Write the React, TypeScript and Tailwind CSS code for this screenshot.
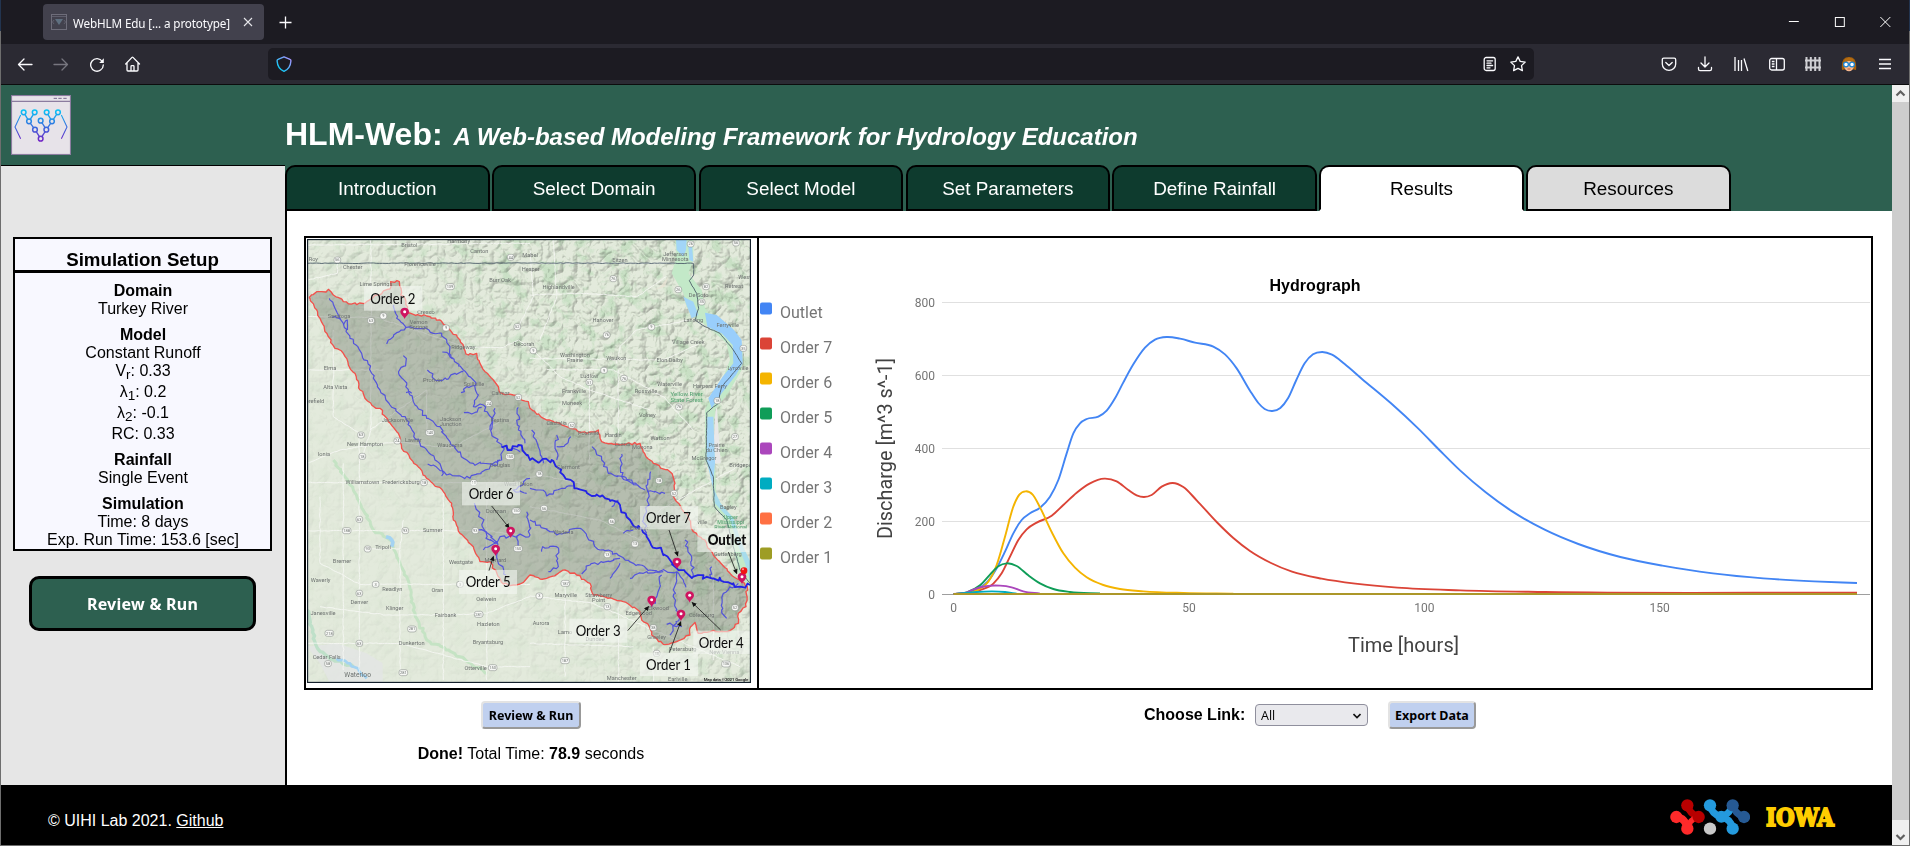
import React from "react";

type Pt = [number, number];

/* Smooth curve through the points: cubic Hermite segments, tangents weighted by spacing. */
function smooth(pts: Pt[]): string {
  const n = pts.length;
  const h = pts.slice(1).map((p, i) => p[0] - pts[i][0]);
  const s = pts.slice(1).map((p, i) => (p[1] - pts[i][1]) / h[i]);
  const m = pts.map((_, i) => {
    if (i === 0) return s[0];
    if (i === n - 1) return s[n - 2];
    return (s[i - 1] * h[i] + s[i] * h[i - 1]) / (h[i - 1] + h[i]);
  });
  let d = `M${pts[0][0]} ${pts[0][1]}`;
  for (let i = 0; i < n - 1; i++) {
    const [x0, y0] = pts[i];
    const [x1, y1] = pts[i + 1];
    const k = h[i] / 3;
    d += `C${x0 + k} ${y0 + m[i] * k} ${x1 - k} ${y1 - m[i + 1] * k} ${x1} ${y1}`;
  }
  return d;
}

/* Polyline subdivided into short, slightly displaced steps, for river banks and borders. */
function rough(src: string, amp: number, close = false): string {
  const pts = src
    .trim()
    .split(/\s+/)
    .map((s) => s.split(",").map(Number) as Pt);
  if (close) pts.push(pts[0]);
  let seed = Math.round(pts[0][0] * 13 + pts[0][1] * 7);
  const rnd = () => {
    seed = (seed * 1103515245 + 12345) % 2147483648;
    return seed / 2147483648 - 0.5;
  };
  let d = `M${pts[0][0]} ${pts[0][1]}`;
  for (let i = 1; i < pts.length; i++) {
    const [x0, y0] = pts[i - 1];
    const [x1, y1] = pts[i];
    const n = Math.max(1, Math.round(Math.hypot(x1 - x0, y1 - y0) / 9));
    for (let k = 1; k <= n; k++) {
      const t = k / n;
      const a = k === n ? 0 : amp;
      d += `L${(x0 + (x1 - x0) * t + rnd() * a).toFixed(1)} ${(y0 + (y1 - y0) * t + rnd() * a).toFixed(1)}`;
    }
  }
  return d;
}

/* ------------------------------ browser chrome ------------------------------ */

const ic = "h-4 w-4";

function ToolButton({ children }: { children: React.ReactNode }) {
  return <div className="flex h-10 w-9 items-center justify-center">{children}</div>;
}

function TabStrip() {
  return (
    <div className="flex h-11 items-start bg-[#1c1b22] pl-[42px]">
      <div className="mt-1 flex h-9 w-[221px] items-center rounded-[4px] bg-[#42414d] pl-2">
        <svg className={ic} viewBox="0 0 16 16" fill="none">
          <rect x="0.5" y="0.5" width="15" height="15" stroke="#6e6d7a" />
          <path d="M4 5h8L8 11z" fill="#5f7080" />
          <path d="M3 6L1.500 8L3 10M13 6l1.500 2L13 10M1 2.500h14" stroke="#5f5e6c" />
        </svg>
        <span className="ml-1.5 w-[158px] whitespace-nowrap pt-px font-['Noto_Sans',sans-serif] text-[11.700px] leading-4 tracking-[-0.130px] text-[#fbfbfe]">
          WebHLM Edu [... a prototype]
        </span>
        <svg className="ml-[12px] h-[10px] w-[10px]" viewBox="0 0 10 10" stroke="#e6e6ea" strokeWidth="1.1">
          <path d="M1 1l8 8M9 1L1 9" />
        </svg>
      </div>
      <svg className="ml-[15px] mt-4 h-[13px] w-[13px]" viewBox="0 0 13 13" stroke="#fbfbfe" strokeWidth="1.300">
        <path d="M6.500 0.500v12M0.500 6.500h12" />
      </svg>
      <div className="ml-auto flex w-[137px] items-center pt-[17px]">
        <svg className="h-[11px] w-[46px]" viewBox="0 0 46 11" stroke="#fff" fill="none">
          <path d="M17 4.500h10" />
        </svg>
        <svg className="h-[11px] w-[46px]" viewBox="0 0 46 11" stroke="#fff" fill="none">
          <rect x="17.500" y="0.500" width="9" height="9" />
        </svg>
        <svg className="h-[11px] w-[46px]" viewBox="0 0 46 11" stroke="#fff" fill="none">
          <path d="M17.500 0l10 10M27.500 0L17.500 10" />
        </svg>
      </div>
    </div>
  );
}

function Toolbar() {
  return (
    <div className="flex h-[41px] items-start border-b border-[#0c0c0d] bg-[#2b2a33] pl-1.5 pr-[6px]">
      <ToolButton>
        <svg className={ic} viewBox="0 0 16 16" fill="none" stroke="#fbfbfe" strokeWidth="1.300" strokeLinecap="round" strokeLinejoin="round">
          <path d="M15 8.500H1.500M7 3L1.500 8.500 7 14" />
        </svg>
      </ToolButton>
      <ToolButton>
        <svg className={ic} viewBox="0 0 16 16" fill="none" stroke="#77767f" strokeWidth="1.300" strokeLinecap="round" strokeLinejoin="round">
          <path d="M1 8.500h13.500M9 3l5.500 5.500L9 14" />
        </svg>
      </ToolButton>
      <ToolButton>
        <svg className={ic} viewBox="0 0 16 16" fill="none" stroke="#fbfbfe" strokeWidth="1.300" strokeLinecap="round">
          <path d="M13.300 5.500A6.300 6.300 0 1 0 14.300 9" />
          <path d="M14.800 2.300v4.600h-4.600z" fill="#fbfbfe" stroke="none" />
        </svg>
      </ToolButton>
      <ToolButton>
        <svg className={ic} viewBox="0 0 16 16" fill="none" stroke="#fbfbfe" strokeWidth="1.300" strokeLinejoin="round" strokeLinecap="round">
          <path d="M.7 8L7 1.400q.5-.5 1 0L14.500 8M2 6.800V14q0 1 1 1h9q1 0 1-1V6.800M6 15v-4.500q0-.8.8-.8h1.400q.8 0 .8.8V15" />
        </svg>
      </ToolButton>
      <div className="ml-[117px] mt-1 flex h-8 w-[1266px] items-center rounded-[5px] bg-[#1c1b22] pl-2 pr-2">
        <svg className={ic} viewBox="0 0 16 16" fill="none" strokeWidth="1.400" strokeLinejoin="round">
          <defs>
            <linearGradient id="shield" x1="0" y1="1" x2="1" y2="0">
              <stop offset="0.100" stopColor="#00d0f5" />
              <stop offset="1" stopColor="#b98cff" />
            </linearGradient>
          </defs>
          <path d="M8 .8L14 3.400Q15 3.800 14.900 5C14.600 10 12.500 13.500 8 15.300 3.500 13.500 1.400 10 1.100 5 1 3.800 2 3.400 2 3.400z" stroke="url(#shield)" />
        </svg>
        <svg className={`ml-auto ${ic}`} viewBox="0 0 16 16" fill="none" stroke="#fbfbfe" strokeWidth="1.300" strokeLinecap="round">
          <rect x="2.200" y="1.500" width="11" height="13" rx="2" />
          <path d="M5 4.800h5.600M5 7.200h4M5 9.500h5.600M5 11.800h3" />
        </svg>
        <svg className={`ml-3 ${ic}`} viewBox="0 0 16 16" fill="none" stroke="#fbfbfe" strokeWidth="1.300" strokeLinejoin="round">
          <path d="M8 .9l2.200 4.500 5 .7-3.700 3.500.9 5L8 12.300l-4.400 2.300.9-5L.8 6.100l5-.7z" />
        </svg>
      </div>
      <div className="ml-auto flex">
        <ToolButton>
          <svg className={ic} viewBox="0 0 16 16" fill="none" stroke="#fbfbfe" strokeWidth="1.300" strokeLinecap="round" strokeLinejoin="round">
            <path d="M2.800 2.200h10.400q1.500 0 1.500 1.500V8A6.700 6.300 0 0 1 1.300 8V3.700q0-1.500 1.500-1.500zM4.800 6.500L8 9.500l3.200-3" />
          </svg>
        </ToolButton>
        <ToolButton>
          <svg className={ic} viewBox="0 0 16 16" fill="none" stroke="#fbfbfe" strokeWidth="1.300" strokeLinecap="round" strokeLinejoin="round">
            <path d="M8 .8v10M4 7l4 4 4-4M1.500 11.500V13q0 1.700 1.700 1.700h9.600q1.700 0 1.700-1.700v-1.500" />
          </svg>
        </ToolButton>
        <ToolButton>
          <svg className={ic} viewBox="0 0 16 16" fill="none" stroke="#fbfbfe" strokeWidth="1.300">
            <path d="M2 1v14M5.500 4v11M8.500 4v11M11 2.500L14.800 15" />
          </svg>
        </ToolButton>
        <ToolButton>
          <svg className={ic} viewBox="0 0 16 16" fill="none" stroke="#fbfbfe" strokeWidth="1.300">
            <rect x="0.700" y="2.500" width="14.600" height="11.500" rx="2" />
            <path d="M7.500 2.500V14M2.800 5.500h2.700M2.800 8h2.700M2.800 10.500h2.700" />
          </svg>
        </ToolButton>
        <ToolButton>
          <svg className={ic} viewBox="0 0 16 16" fill="none" stroke="#cfcfd4" strokeWidth="2">
            <path d="M1.500 1v14M5.800 1v14M10.200 1v14M14.500 1v14M0 4.500h16M0 11.500h16" />
          </svg>
        </ToolButton>
        <ToolButton>
          <svg className={ic} viewBox="0 0 16 16">
            <path d="M1 14Q-.5 1 8 1t7 13q-3-1-7-1t-7 1z" fill="#a5610d" />
            <ellipse cx="8" cy="10" rx="4.800" ry="5.200" fill="#f9b98f" />
            <path d="M3 6q3 0 5-2 2 2 5 2l-1-3-4-1.500L4 3z" fill="#b56c12" />
            <circle cx="5" cy="8.500" r="2.400" fill="#fff" stroke="#1d86d6" strokeWidth="1.300" />
            <circle cx="11" cy="8.500" r="2.400" fill="#fff" stroke="#1d86d6" strokeWidth="1.300" />
            <path d="M6.500 13h3" stroke="#b35a3c" />
          </svg>
        </ToolButton>
        <ToolButton>
          <svg className={ic} viewBox="0 0 16 16" fill="none" stroke="#fbfbfe" strokeWidth="1.300">
            <path d="M2 3.500h12M2 8h12M2 12.500h12" />
          </svg>
        </ToolButton>
      </div>
    </div>
  );
}

function Scrollbar() {
  return (
    <div className="flex w-[17px] shrink-0 flex-col bg-[#f0f0f0]">
      <svg className="h-[17px] w-[17px]" viewBox="0 0 17 17" fill="none" stroke="#606060" strokeWidth="2.200">
        <path d="M4.500 10.500l4-4 4 4" />
      </svg>
      <div className="h-[718px] bg-[#cdcdcd]" />
      <svg className="mt-auto h-[17px] w-[17px]" viewBox="0 0 17 17" fill="none" stroke="#606060" strokeWidth="2.200">
        <path d="M4.500 7l4 4 4-4" />
      </svg>
    </div>
  );
}

/* ---------------------------------- logos ---------------------------------- */

const branches: Pt[][] = [
  [[38, 52], [54, 79]],
  [[71, 52], [54, 79]],
  [[54, 79], [72, 104]],
  [[72, 104], [89, 131]],
  [[89, 131], [106, 104]],
  [[106, 104], [89, 77]],
  [[106, 104], [123, 79]],
  [[123, 79], [107, 52]],
  [[123, 79], [141, 52]],
];
const nodes: Pt[] = [[38, 52], [71, 52], [107, 52], [141, 52], [54, 79], [123, 79], [89, 77], [72, 104], [106, 104], [89, 131]];

function AppLogo() {
  return (
    <svg className="h-[60px] w-[60px]" viewBox="0 0 180 180" fill="none">
      <defs>
        <linearGradient id="tree" gradientUnits="userSpaceOnUse" x1="0" y1="45" x2="0" y2="140">
          <stop offset="0" stopColor="#08c4f6" />
          <stop offset="0.550" stopColor="#3a68dc" />
          <stop offset="1" stopColor="#7420c4" />
        </linearGradient>
      </defs>
      <rect x="1.500" y="1.500" width="177" height="177" fill="#e7e3e9" stroke="#8b7c9f" strokeWidth="3.500" />
      <path d="M0 19h180" stroke="#8b7c9f" strokeWidth="3.500" />
      <path d="M128 10h10M142 10h10M157 10h10" stroke="#75678c" strokeWidth="3" />
      <g stroke="url(#tree)" strokeWidth="4">
        {branches.map((b, i) => (
          <path key={i} d={`M${b[0][0]} ${b[0][1]}L${b[1][0] + 0.01} ${b[1][1]}`} />
        ))}
        <path d="M29 60L12 96l17 35M151 60l17 36-17 35" strokeWidth="3.200" />
        {nodes.map(([x, y], i) => (
          <circle key={i} cx={x} cy={y} r="7" fill="#e7e3e9" strokeWidth="4.500" />
        ))}
      </g>
    </svg>
  );
}

function LabLogo() {
  return (
    <svg className="h-9 w-20" viewBox="122 57 240 108">
      <g strokeWidth="21" fill="none">
        <path d="M142 111Q168 114 174 145" stroke="#ff2a2a" strokeWidth="22" />
        <path d="M174 76Q182 104 208 111" stroke="#b80000" />
        <path d="M174 145Q180 118 204 113" stroke="#ff2a2a" strokeWidth="17" />
        <circle cx="141" cy="111" r="18.500" fill="#ff2a2a" />
        <circle cx="174" cy="146" r="18.500" fill="#ff2a2a" />
        <circle cx="174" cy="76" r="18.500" fill="#b80000" />
        <circle cx="208" cy="111" r="18.500" fill="#b80000" />
        <path d="M310 76Q318 104 344 111" stroke="#265a94" />
        <path d="M242 76Q248 104 276 111Q304 116 310 145" stroke="#249add" />
        <path d="M276 108Q298 104 303 88" stroke="#249add" strokeWidth="20" />
        <circle cx="242" cy="76" r="18.500" fill="#249add" />
        <circle cx="276" cy="110" r="18" fill="#249add" />
        <circle cx="310" cy="146" r="18.500" fill="#249add" />
        <circle cx="310" cy="76" r="18.500" fill="#265a94" />
        <circle cx="344" cy="111" r="18.500" fill="#265a94" />
        <circle cx="242" cy="146" r="18.500" fill="#c8c8c8" />
      </g>
    </svg>
  );
}

/* ----------------------------------- map ----------------------------------- */

/* Map coordinates: three units to a pixel. */
const basin =
  "27,203 50,185 78,186 85,178 100,195 130,215 170,224 200,215 230,195 270,177 272,155 298,155 303,175 302,195 318,215 322,250 380,258 420,270 450,300 480,330 495,362 505,375 530,370 545,410 580,450 600,488 640,495 685,515 690,535 740,570 800,590 860,610 895,600 905,635 950,642 1020,640 1038,680 1060,700 1110,725 1125,760 1120,800 1165,860 1180,905 1215,930 1240,975 1290,1030 1325,1055 1342,1070 1338,1130 1315,1150 1315,1180 1290,1202 1230,1205 1195,1210 1185,1177 1172,1190 1170,1215 1130,1235 1090,1243 1055,1215 1048,1190 1025,1170 1020,1145 970,1115 880,1095 870,1060 830,1035 795,1020 740,1045 720,1047 690,1035 660,1062 640,1065 610,1062 600,1045 570,995 540,995 520,950 480,910 460,870 455,820 430,785 380,745 350,705 330,685 305,655 295,610 265,575 240,535 215,525 180,480 165,430 145,405 130,370 105,355 85,320 60,265 30,205";

const streams = [
  "88,205 105,235 130,280 150,325 185,370 215,430 240,480 270,525 320,570 360,640 405,690 440,735 510,745 600,690",
  "130,285 142,270 142,300",
  "96,262 122,266",
  "282,225 290,265 318,292 375,293 400,310 425,310 450,350 452,375 490,420 520,450 535,495 520,530 550,525 575,570 575,610 605,652",
  "318,292 290,308 265,330 260,342",
  "427,366 460,385",
  "382,420 405,450 440,448 465,430 490,425",
  "483,488 500,470 530,465",
  "492,548 515,552 545,532",
  "310,377 318,395 296,430 320,465 330,495 380,565 420,590 450,635 500,690 520,700 580,706 605,690 608,650",
  "318,488 335,490",
  "655,532 655,600 675,640",
  "585,535 570,600",
  "383,702 400,705 430,730 425,738",
  "605,652 640,655 660,665",
  "695,600 715,650 730,700",
  "770,615 770,690",
  "812,620 795,645 770,650",
  "876,650 905,690 925,730 990,750 1035,780",
  "965,672 965,740 1010,762",
  "1052,725 1042,780 1045,820 1030,870 1040,910",
  "1042,785 1095,790",
  "690,775 720,780 740,798 800,770 820,768",
  "690,870 720,885 770,915 840,895 900,960 950,970 1000,1000 1050,1020 1130,1025",
  "725,965 728,950 770,950 775,1010 745,1025",
  "845,1032 870,1005 930,995 960,985",
  "930,1045 960,1000",
  "990,1045 1030,1030 1090,1025",
  "1155,930 1175,980 1180,1040",
  "1235,1010 1233,1045",
  "1130,1025 1120,1080 1125,1130 1140,1160 1110,1215",
  "1130,1025 1158,1072",
  "1085,1035 1070,1100 1055,1130",
  "1315,1060 1270,1090 1265,1140 1280,1165",
  "1100,1183 1145,1190",
  "970,910 1000,900",
  "955,810 935,830",
  "523,820 545,865 558,925 590,938",
  "525,900 558,905 590,940 600,920 690,915 680,845",
  "550,960 590,935 590,975 595,1000 618,1035",
  "690,745 640,780 680,790",
  "650,920 655,955",
];

const mainRiver =
  "605,652 635,660 655,645 690,690 720,695 755,690 790,735 830,775 900,800 960,825 990,870 1040,920 1070,955 1110,990 1135,1020 1180,1040 1240,1045 1300,1060 1320,1070 1350,1065";

const places: [number, number, string][] = [
  [328, 51, "Bristol"], [476, 38, "Harmony"], [538, 69, "Canton"], [40, 93, "Roy"], [158, 117, "Chester"], [360, 107, "Florenceville"],
  [600, 156, "Burr Oak"], [228, 169, "Lime Springs"], [378, 252, "Cresco"], [117, 265, "Saratoga"], [356, 283, "Vernon"], [356, 297, "Springs"],
  [490, 356, "Ridgeway"], [90, 419, "Elma"], [106, 477, "Alta Vista"], [398, 455, "Protivin"], [522, 469, "Spillville"],
  [602, 496, "Calmar"], [45, 520, "erefield"], [292, 575, "Jacksonville"], [452, 572, "Jackson"], [452, 587, "Junction"], [600, 575, "Festina"],
  [195, 649, "New Hampton"], [340, 635, "Lawler"], [450, 652, "Waucoma"], [72, 679, "Ionia"], [672, 348, "Decorah"],
  [690, 80, "Mabel"], [692, 122, "Hesper"], [776, 177, "Highlandville"], [960, 97, "Eitzen"], [1126, 79, "Jefferson"], [1126, 94, "Minnesota"],
  [1302, 173, "Retreat"], [1334, 147, "West"], [1196, 201, "De Soto"], [909, 277, "Hanover"], [1180, 277, "Lansing"], [1283, 291, "Ferryville"],
  [1165, 341, "Village Creek"], [825, 382, "Washington"], [825, 397, "Prairie"], [949, 390, "Waukon"], [1109, 396, "Elon  Dalby"], [868, 443, "Ludlow"],
  [1109, 467, "Waterville"], [1230, 475, "Harpers Ferry"], [822, 488, "Frankville"], [1038, 488, "Rossville"], [1314, 419, "Lynxville"], [816, 524, "Moneek"],
  [1042, 561, "Volney"], [770, 584, "Castalia"], [866, 616, "Postville"], [940, 622, "Hardin"], [1080, 629, "Watson"], [967, 648, "Luana"],
  [1027, 657, "Monona"], [1250, 650, "Prairie"], [1250, 665, "du Chien"], [1212, 690, "McGregor"], [187, 763, "Williamstown"], [303, 763, "Fredericksburg"],
  [588, 848, "Dorman"], [398, 907, "Sumner"], [249, 956, "Tripoli"], [126, 998, "Bremer"], [483, 1002, "Westgate"], [586, 996, "Maynard"],
  [62, 1055, "Waverly"], [277, 1083, "Readlyn"], [412, 1085, "Oran"], [178, 1122, "Denver"], [559, 1114, "Oelwein"], [284, 1141, "Klinger"],
  [69, 1156, "Janesville"], [437, 1162, "Fairbank"], [565, 1187, "Hazleton"], [335, 1245, "Dunkerton"], [564, 1241, "Bryantsburg"],
  [80, 1288, "Cedar Falls"], [527, 1320, "Otterville"], [805, 716, "Clermont"], [600, 710, "Douglas"], [790, 913, "Wadena"], [797, 1102, "Maryville"], [896, 1101, "Strawberry"],
  [896, 1115, "Point"], [723, 1186, "Aurora"], [795, 1211, "Lamo"], [885, 1234, "Dundee"], [1075, 1139, "Elkwood"], [1016, 1155, "Edgewood"],
  [1205, 1162, "Colesburg"], [1070, 1228, "Greeley"], [1148, 1262, "Petersburg"], [1273, 1273, "New Vienna"], [965, 1349, "Manchester"], [1133, 1354, "Earlville"],
  [1322, 710, "Bridgepo"], [1285, 837, "Bagley"], [1283, 978, "Guttenberg"], [1206, 882, "ville"], [1018, 900, "Elkader"], [655, 767, "West Union"],
];

const shields: [number, number, string][] = [
  [112, 90, "56"], [213, 272, "63"], [250, 258, "9"], [450, 170, "139"], [632, 82, "44"], [652, 290, "52"], [438, 294, "9"], [566, 520, "24"],
  [183, 615, "63"], [292, 633, "24"], [390, 608, "140"], [187, 679, "18"], [630, 680, "150"], [655, 502, "52"], [940, 146, "76"], [1172, 42, "26"],
  [1308, 39, "56"], [1135, 179, "26"], [1218, 170, "82"], [1205, 216, "35"], [920, 315, "76"], [1054, 291, "9"], [700, 362, "9"], [1330, 355, "35"],
  [912, 421, "9"], [972, 445, "76"], [868, 457, "51"], [1137, 531, "76"], [815, 586, "52"], [1305, 620, "27"], [1252, 512, "18"], [372, 758, "18"], [521, 758, "18"],
  [178, 868, "63"], [140, 902, "188"], [316, 902, "93"], [526, 902, "93"], [203, 957, "93"], [649, 843, "150"], [654, 956, "150"], [227, 1063, "3"], [480, 1063, "3"],
  [178, 1090, "63"], [88, 1210, "218"], [336, 1197, "281"], [536, 1153, "281"], [178, 1240, "63"], [84, 1301, "58"], [310, 1328, "281"], [578, 1313, "150"],
  [718, 732, "18"], [1077, 752, "18"], [1122, 790, "52"], [732, 835, "56"], [935, 874, "56"], [1005, 942, "13"], [796, 1060, "187"], [922, 974, "13"],
  [718, 1098, "3"], [922, 1130, "13"], [1060, 1193, "38"], [1305, 1133, "52"], [795, 1292, "187"], [1278, 1302, "136"], [1070, 1270, "38"],
];

const roads = [
  "21,260 230,262 500,352 610,352 655,330 690,350",
  "21,420 250,420",
  "100,300 100,560 178,610 178,1340",
  "213,27 213,600 183,690",
  "112,90 112,130 21,150",
  "21,700 120,660 290,635 450,655 600,575",
  "21,758 370,758 640,758 720,735 840,760",
  "21,902 560,902 660,915",
  "60,800 60,1000 180,1063 690,1063",
  "130,700 130,1320",
  "430,760 430,1350",
  "210,957 300,957 310,870",
  "60,1130 260,1155 420,1155 560,1150 690,1100",
  "21,1240 300,1240 560,1310 690,1310",
  "560,758 560,1350",
  "300,960 300,1340",
  "210,600 380,480 380,600",
  "690,195 860,190 1010,200 1100,140",
  "690,350 780,440 870,480 1050,540",
  "655,290 700,200 690,60",
  "760,27 770,200 720,330",
  "950,400 960,350 1010,300 1180,268",
  "740,418 940,420 1090,500 1180,600",
  "690,385 1090,390 1200,340",
  "868,430 868,700",
  "955,420 955,620",
  "690,100 1180,100",
  "21,45 690,40",
  "690,830 900,870 1020,930 1080,840 1330,700",
  "690,1098 880,1120 1060,1200 1320,1310",
  "795,1060 795,1340",
  "955,1130 955,1355",
  "1060,1250 1060,1355",
  "1240,1020 1240,1290",
  "690,1240 1000,1250",
];

const orders: { label: string; x: number; y: number; box: [number, number, number, number]; bold?: boolean }[] = [
  { label: "Order 2", x: 211, y: 222, box: [192, 168, 175, 74] },
  { label: "Order 6", x: 506, y: 806, box: [486, 756, 174, 70] },
  { label: "Order 5", x: 497, y: 1072, box: [477, 1020, 174, 72] },
  { label: "Order 7", x: 1038, y: 878, box: [1020, 828, 174, 70] },
  { label: "Order 3", x: 827, y: 1217, box: [808, 1166, 174, 72] },
  { label: "Order 1", x: 1038, y: 1320, box: [1020, 1268, 174, 70] },
  { label: "Order 4", x: 1196, y: 1253, box: [1180, 1202, 173, 70] },
  { label: "Outlet", x: 1223, y: 945, box: [1192, 894, 161, 72], bold: true },
];

const arrows: [number, number, number, number][] = [
  [575, 828, 627, 893],
  [567, 1022, 580, 980],
  [1107, 900, 1133, 977],
  [983, 1202, 1045, 1130],
  [1108, 1268, 1142, 1176],
  [1262, 1200, 1177, 1118],
  [1285, 966, 1310, 1030],
];

const pins: Pt[] = [[314, 267], [632, 924], [587, 978], [1131, 1017], [1055, 1131], [1169, 1118], [1143, 1173], [1326, 1062]];

function BasinMap() {
  return (
    <svg className="h-[444px] w-[444px]" viewBox="21 27 1332 1332">
      <defs>
        <filter id="relief" x="0" y="0" width="100%" height="100%" colorInterpolationFilters="sRGB">
          <feTurbulence type="turbulence" baseFrequency="0.024" numOctaves="4" seed="8" result="n" />
          <feDiffuseLighting in="n" surfaceScale="11" diffuseConstant="1.200" lightingColor="#f8fff6">
            <feDistantLight azimuth="225" elevation="58" />
          </feDiffuseLighting>
        </filter>
        <filter id="woods" x="0" y="0" width="100%" height="100%" colorInterpolationFilters="sRGB">
          <feTurbulence type="fractalNoise" baseFrequency="0.022" numOctaves="5" seed="21" />
          <feColorMatrix values="0 0 0 0 0.68  0 0 0 0 0.84  0 0 0 0 0.68  0 5 0 0 -2.500" />
        </filter>
        <linearGradient id="hills" gradientUnits="userSpaceOnUse" x1="330" y1="950" x2="960" y2="420">
          <stop offset="0" stopColor="#fff" stopOpacity="0.100" />
          <stop offset="0.450" stopColor="#fff" stopOpacity="0.350" />
          <stop offset="1" stopColor="#fff" stopOpacity="0.900" />
        </linearGradient>
        <mask id="hillmask">
          <rect x="21" y="27" width="1332" height="1332" fill="url(#hills)" />
        </mask>
        <marker id="tip" markerWidth="16" markerHeight="16" refX="12" refY="7" orient="auto" markerUnits="userSpaceOnUse">
          <path d="M0 0L15 7L0 14z" fill="#111" />
        </marker>
      </defs>
      <rect x="21" y="27" width="1332" height="1332" fill="#e3eadc" />
      <g mask="url(#hillmask)">
        <rect x="21" y="27" width="1332" height="1332" filter="url(#woods)" opacity="0.550" />
      </g>
      <g mask="url(#hillmask)" className="mix-blend-multiply">
        <rect x="21" y="27" width="1332" height="1332" filter="url(#relief)" opacity="0.380" />
      </g>
      <path d="M21 1250L110 1240L200 1270L248 1300V1359H90L60 1300z" fill="#e3e5e4" opacity="0.850" />
      <path d="M1250 520L1262 700L1238 700L1245 560z" fill="#e8e8e8" />

      <g fill="none" strokeLinejoin="round">
        <path d={rough("100,690 160,780 195,850 220,900 270,930 320,1040 345,1150 380,1230 480,1280 560,1330", 8)} stroke="#c5e3c4" strokeWidth="9" />
        <path d={rough("21,1140 50,1250 100,1290 160,1310", 8)} stroke="#bfe0c9" strokeWidth="10" />
        <path d={rough("110,1285 150,1300 200,1345", 8)} stroke="#a4d3f2" strokeWidth="8" />
        <path d={rough("258,920 275,930 275,950", 8)} stroke="#a4d3f2" strokeWidth="11" />
        <g stroke="#f7f8f5" strokeWidth="3" opacity="0.850">
          {roads.map((r, i) => (
            <path key={i} d={rough(r, 3)} />
          ))}
        </g>
      </g>

      {/* Mississippi valley */}
      <path d="M1125 27L1130 80L1115 130L1150 190L1160 230L1185 265L1225 290L1280 340L1290 390L1270 440L1240 490L1215 540L1215 690L1235 740L1240 820L1280 880L1300 950L1320 1050L1353 1070V1020L1330 960L1300 860L1250 820L1245 700L1240 600L1245 540L1290 480L1325 420L1330 350L1300 310L1235 265L1215 235L1205 180L1165 130L1180 90L1180 27z" fill="#c3e9c8" />
      <path d="M1128 27L1130 60L1150 80L1158 60L1160 27z M1150 200L1175 265L1195 255L1180 215z" fill="#a2d5f7" />
      <path d="M1164 35L1168 90L1180 95L1175 35z" fill="#a2d5f7" />
      <path d="M1215 248L1250 255L1300 298L1325 330L1328 400L1308 435L1265 490L1235 535L1225 505L1268 440L1300 400L1298 345L1265 310L1222 290z" fill="#99cefb" />
      <path d="M1222 560L1240 560L1245 700L1238 770L1220 690z" fill="#a2d5f7" />
      <path d="M1238 770L1245 820L1290 870L1312 940L1335 1000L1353 1060V1000L1325 940L1300 865L1262 820z" fill="#a7dcec" />
      <path d="M1095 170L1060 180L1030 195L1080 170L1105 140z" fill="#e9e4d5" opacity="0.800" />
      <path d={rough("21,100 690,99 1180,100 1181,135 1168,152 1190,190 1196,235 1185,270 1215,290 1260,310 1300,360 1325,400 1265,470 1255,520 1220,548 1218,690 1240,740 1243,830 1280,870 1300,950 1320,1020 1350,1060", 2)} fill="none" stroke="#4b5c68" strokeWidth="3" opacity="0.900" />

      <path d={rough(basin, 7, true)} fill="#4c5548" fillOpacity="0.300" stroke="#f2524c" strokeWidth="4" strokeLinejoin="round" />
      <g fill="none" stroke="#4a4ae0" strokeWidth="3.600" strokeLinejoin="round" opacity="0.900">
        {streams.map((s, i) => (
          <path key={i} d={rough(s, 11)} />
        ))}
      </g>
      <path d={rough(mainRiver, 16)} fill="none" stroke="#2222e6" strokeWidth="5.500" strokeLinejoin="round" />

      <g fontFamily="Roboto, sans-serif" fontSize="17" textAnchor="middle" fill="#6d7270">
        {places.map(([x, y, t], i) => (
          <text key={i} x={x} y={y}>
            {t}
          </text>
        ))}
        <text x="173" y="1341" fontSize="20">Waterloo</text>
        <g fill="#4f9f6d" fontSize="18">
          <text x="1160" y="499">Yellow River</text>
          <text x="1160" y="516">State Forest</text>
          <text x="1292" y="866" fontSize="16">Upper</text>
          <text x="1292" y="881" fontSize="16">Mississippi</text>
          <text x="1292" y="896" fontSize="16">River National</text>
        </g>
        <g fontSize="12">
          {shields.map(([x, y, t], i) => (
            <g key={i}>
              <rect x={x - (t.length > 2 ? 13 : 10)} y={y - 9} width={t.length > 2 ? 26 : 20} height="18" rx="7" fill="#f7f8f5" stroke="#8f9490" strokeWidth="1.800" />
              <text x={x} y={y + 4}>
                {t}
              </text>
            </g>
          ))}
        </g>
        <text x="1278" y="1352" fontSize="13" fontWeight="700" fill="#333" textLength="134">Map data ©2021 Google</text>
      </g>

      {orders.map((o) => (
        <rect key={o.label} x={o.box[0]} y={o.box[1]} width={o.box[2]} height={o.box[3]} fill="#f4f6f1" fillOpacity="0.600" />
      ))}
      <g stroke="#222" strokeWidth="2.500">
        {arrows.map(([a, b, c, d], i) => (
          <line key={i} x1={a} y1={b} x2={c} y2={d} markerEnd="url(#tip)" />
        ))}
      </g>
      {pins.map(([x, y], i) => (
        <g key={i} transform={`translate(${x} ${y})`}>
          <path d="M0 0C-3-9-13-13-13-22A13 12 0 0 1 13-22C13-13 3-9 0 0z" fill="#cf1460" />
          <circle cx="0" cy="-22" r="4.500" fill="#fff" />
        </g>
      ))}
      <circle cx="1332" cy="1022" r="10" fill="#f01414" />
      <circle cx="1329" cy="1018" r="3" fill="#ff9c9c" />
      <g fontFamily="Lato, sans-serif" fontSize="43" fill="#0c0c0c">
        {orders.map((o) => (
          <text key={o.label} x={o.x} y={o.y} textLength={o.bold ? 116 : 135} lengthAdjust="spacingAndGlyphs" fontWeight={o.bold ? 900 : 400}>
            {o.label}
          </text>
        ))}
      </g>
      <rect x="22.500" y="28.500" width="1329" height="1329" fill="none" stroke="#14202c" strokeWidth="4" />
    </svg>
  );
}

/* ---------------------------------- chart ---------------------------------- */

const series: { name: string; color: string; pts: Pt[] }[] = [
  {
    name: "Outlet",
    color: "#4285f4",
    pts: [[611, 1092], [645, 1090], [680, 1078], [712, 1056], [740, 1015], [765, 965], [790, 910], [815, 870], [840, 850], [870, 833], [900, 800], [925, 750], [950, 670], [970, 610], [990, 580], [1010, 567], [1045, 560], [1070, 542], [1095, 505], [1120, 457], [1150, 403], [1185, 353], [1215, 329], [1250, 321], [1290, 326], [1335, 338], [1390, 350], [1425, 373], [1460, 415], [1500, 482], [1525, 519], [1544, 537], [1567, 543], [1591, 534], [1614, 505], [1639, 450], [1664, 400], [1689, 373], [1717, 366], [1746, 374], [1784, 402], [1835, 446], [1923, 520], [2005, 596], [2068, 660], [2131, 722], [2207, 787], [2283, 842], [2384, 899], [2485, 942], [2611, 981], [2737, 1007], [2889, 1030], [3040, 1045], [3192, 1054], [3321, 1059]],
  },
  {
    name: "Order 7",
    color: "#db4437",
    pts: [[611, 1092], [650, 1089], [690, 1080], [730, 1061], [755, 1030], [780, 980], [805, 930], [830, 898], [860, 878], [905, 857], [940, 825], [980, 788], [1020, 760], [1063, 746], [1100, 754], [1135, 780], [1160, 796], [1182, 801], [1205, 795], [1235, 770], [1268, 759], [1300, 771], [1340, 811], [1400, 876], [1450, 924], [1500, 963], [1563, 999], [1626, 1025], [1715, 1046], [1816, 1061], [1942, 1073], [2131, 1081], [2384, 1086], [3321, 1088]],
  },
  {
    name: "Order 6",
    color: "#f4b400",
    pts: [[611, 1092], [650, 1090], [690, 1076], [715, 1055], [740, 1005], [765, 920], [790, 830], [808, 794], [827, 784], [848, 794], [870, 832], [905, 906], [940, 970], [975, 1013], [1010, 1042], [1060, 1065], [1110, 1077], [1180, 1084], [1300, 1089], [1450, 1091]],
  },
  {
    name: "Order 5",
    color: "#0f9d58",
    pts: [[611, 1092], [650, 1087], [690, 1066], [720, 1034], [745, 1009], [770, 1000], [800, 1008], [835, 1036], [870, 1060], [910, 1077], [960, 1086], [1050, 1090]],
  },
  { name: "Order 4", color: "#ab47bc", pts: [[611, 1092], [645, 1089], [670, 1079], [695, 1071], [750, 1067], [785, 1072], [820, 1084], [870, 1091]] },
  { name: "Order 3", color: "#00acc1", pts: [[611, 1092], [650, 1089], [680, 1086], [765, 1086], [800, 1091]] },
  { name: "Order 2", color: "#ff7043", pts: [[611, 1092], [3321, 1092]] },
  { name: "Order 1", color: "#9e9d24", pts: [[611, 1092], [3321, 1092]] },
];

/* The view box starts at the panel's inner corner, so all numbers are page pixels. */
function Hydrograph() {
  return (
    <svg className="h-[450px] w-[1112px]" viewBox="759 238 1112 450" fontFamily="Roboto, sans-serif">
      {series.map((s, i) => (
        <g key={s.name}>
          <rect x="760" y={302.500 + i * 35} width="12" height="12" rx="2" fill={s.color} />
          <text x="780" y={318 + i * 35} fontSize="16" fill="#757575">
            {s.name}
          </text>
        </g>
      ))}
      {[0, 200, 400, 600, 800].map((v) => (
        <g key={v}>
          <path d={`M942 ${594.500 - v * 0.365}H1870`} stroke={v === 0 ? "#9e9e9e" : "#e0e0e0"} />
          <text x="935" y={598.500 - v * 0.365} textAnchor="end" fontSize="12" fill="#757575">
            {v}
          </text>
        </g>
      ))}
      {[0, 50, 100, 150].map((v) => (
        <text key={v} x={953.700 + v * 4.706} y="612" textAnchor="middle" fontSize="12" fill="#757575">
          {v}
        </text>
      ))}
      <g transform="translate(750 230) scale(0.333333)" fill="none" strokeWidth="5.700">
        {series.map((s) => (
          <path key={s.name} d={smooth(s.pts)} stroke={s.color} strokeOpacity={s.name === "Order 1" ? 0.850 : 1} />
        ))}
      </g>
      <text x="1315" y="291" textAnchor="middle" fontFamily="'Liberation Sans', Arial, sans-serif" fontWeight="700" fontSize="16" textLength="91">
        Hydrograph
      </text>
      <text x="1403.500" y="652" textAnchor="middle" fontSize="20" fill="#424242" textLength="111" lengthAdjust="spacingAndGlyphs">
        Time [hours]
      </text>
      <text transform="translate(892 448.500) rotate(-90)" textAnchor="middle" fontSize="20" fill="#424242" textLength="181" lengthAdjust="spacingAndGlyphs">
        Discharge [m^3 s^-1]
      </text>
    </svg>
  );
}

/* ----------------------------------- page ----------------------------------- */

function Tab({ label, className }: { label: string; className: string }) {
  return (
    <div className={`flex h-[46px] w-[204.500px] shrink-0 items-center justify-center rounded-t-[10px] border-2 border-black pt-0.5 text-[18.900px] leading-5 ${className}`}>
      {label}
    </div>
  );
}

function SetupGroup({ title, children }: { title: string; children: React.ReactNode }) {
  return (
    <div className="mb-2">
      <div className="font-bold">{title}</div>
      {children}
    </div>
  );
}

const sub = "relative top-[3px] text-[13.500px] leading-none";

function Sidebar() {
  return (
    <aside className="flex w-[284px] shrink-0 flex-col items-center border-t border-black bg-[#e6e6e6] pr-px pt-[71px]">
      <section className="h-[314px] w-[259px] border-2 border-black bg-[#f8f8ff] text-center text-[16px] leading-[18px]">
        <h2 className="h-[34px] border-b-[3px] border-black pt-[10px] text-[18.700px] font-bold leading-[22px]">Simulation Setup</h2>
        <div className="pl-px pt-[9px]">
          <SetupGroup title="Domain">
            <div>Turkey River</div>
          </SetupGroup>
          <SetupGroup title="Model">
            <div>Constant Runoff</div>
            <div className="h-[21px]">
              V<span className={sub}>r</span>: 0.33
            </div>
            <div className="h-[21px]">
              λ<span className={sub}>1</span>: 0.2
            </div>
            <div className="h-[21px]">
              λ<span className={sub}>2</span>: -0.1
            </div>
            <div>RC: 0.33</div>
          </SetupGroup>
          <SetupGroup title="Rainfall">
            <div>Single Event</div>
          </SetupGroup>
          <SetupGroup title="Simulation">
            <div>Time: 8 days</div>
            <div>Exp. Run Time: 153.6 [sec]</div>
          </SetupGroup>
        </div>
      </section>
      <button className="mt-[25px] h-[55px] w-[227px] rounded-[10px] border-[3px] border-black bg-[#2d6050] font-['Noto_Sans',sans-serif] text-[16px] font-bold tracking-[0.250px] text-white">
        Review &amp; Run
      </button>
    </aside>
  );
}

const smallButton =
  "h-7 rounded-[4px] border-2 border-t-[#e3e3e3] border-l-[#e3e3e3] border-r-[#999] border-b-[#999] bg-[#c0d0ef] pt-px font-['Noto_Sans',sans-serif] text-[12.500px] font-bold leading-[22px] text-black";

function Results() {
  return (
    <main className="flex flex-1 flex-col border-l-2 border-black bg-white pl-[17px] pt-[25px]">
      <div className="flex h-[454px] w-[1569px] border-2 border-black">
        <div className="w-[453px] shrink-0 border-r-2 border-black p-px">
          <BasinMap />
        </div>
        <Hydrograph />
      </div>
      <div className="flex w-[1569px] pt-[11px]">
        <div className="flex w-[454px] flex-col items-center">
          <button className={`w-[100px] ${smallButton}`}>Review &amp; Run</button>
          <p className="mt-4 text-[16px] leading-[18px]">
            <b>Done!</b> Total Time: <b>78.9</b> seconds
          </p>
        </div>
        <div className="flex h-7 flex-1 items-center pl-[386px]">
          <span className="w-[111px] whitespace-nowrap text-[16px] font-bold leading-[18px]">Choose Link:</span>
          <div className="flex h-[22px] w-[113px] items-center justify-between rounded-[4px] border border-[#8f8f9d] bg-[#e9e9ed] pl-[5px] pr-1.5 pt-px font-['Open_Sans',sans-serif] text-[12.500px] leading-4">
            All
            <svg className="h-2 w-2" viewBox="0 0 8 8" fill="none" stroke="#111" strokeWidth="1.600">
              <path d="M0.500 2l3.500 3.500L7.500 2" />
            </svg>
          </div>
          <button className={`ml-5 w-[88px] ${smallButton}`}>Export Data</button>
        </div>
      </div>
    </main>
  );
}

const greenTabs = ["Introduction", "Select Domain", "Select Model", "Set Parameters", "Define Rainfall"];

export default function App() {
  return (
    <div className="flex h-[846px] w-[1910px] flex-col overflow-hidden bg-[linear-gradient(#22344f_31px,#6e6e6e_31px)] px-px pb-px font-['Liberation_Sans',Arial,sans-serif] text-black">
      <TabStrip />
      <Toolbar />
      <div className="flex h-[760px]">
        <div className="flex w-[1891px] flex-col">
          <header className="flex h-20 shrink-0 items-start bg-[#2d6050] pl-2.5 pt-2.5 text-white">
            <AppLogo />
            <h1 className="ml-[214px] mt-[21px] flex items-baseline whitespace-nowrap text-[32px] font-bold leading-9">
              HLM-Web:
              <span className="ml-[11px] text-[24px] italic">A Web-based Modeling Framework for Hydrology Education</span>
            </h1>
          </header>
          <div className="flex h-[620px] shrink-0">
            <Sidebar />
            <div className="flex flex-1 flex-col">
              <nav className="flex h-[46px] shrink-0 gap-[2.350px] bg-[#2d6050]">
                {greenTabs.map((t) => (
                  <Tab key={t} label={t} className="bg-[#0e3b2e] text-white" />
                ))}
                <Tab label="Results" className="border-b-white bg-white" />
                <Tab label="Resources" className="bg-[#dcdcdc]" />
              </nav>
              <Results />
            </div>
          </div>
          <footer className="flex h-[60px] items-center bg-black pl-[47px] pr-[55px] text-[16px] text-white">
            <span className="pt-[11px]">
              © UIHI Lab 2021. <a className="underline">Github</a>
            </span>
            <div className="ml-auto flex items-center pt-1">
              <LabLogo />
              <svg className="ml-[13px] h-[30px] w-[74px]" viewBox="0 0 74 30">
                <text x="3" y="24" fontFamily="'DejaVu Serif', serif" fontWeight="700" fontSize="25" fill="#ffcd00" stroke="#ffcd00" strokeWidth="2" textLength="68" lengthAdjust="spacingAndGlyphs">
                  IOWA
                </text>
              </svg>
            </div>
          </footer>
        </div>
        <Scrollbar />
      </div>
    </div>
  );
}
